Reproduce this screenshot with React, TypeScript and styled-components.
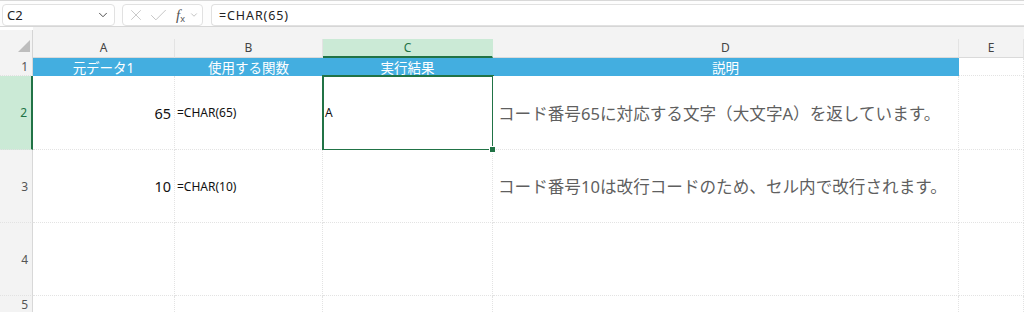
import styled, { createGlobalStyle } from "styled-components";
import { ChevronDown, X, Check } from "lucide-react";

const GlobalStyle = createGlobalStyle`
  html, body {
    margin: 0;
    padding: 0;
    background: #ffffff;
    font-family: "Noto Sans", "Noto Sans CJK JP", sans-serif;
    overflow: hidden;
  }
`;

const GREEN = "#217346";
const BLUE = "#43aee0";

const Page = styled.div`
  width: 1024px;
  height: 312px;
  overflow: hidden;
  display: flex;
  flex-direction: column;
`;

const Toolbar = styled.div`
  display: flex;
  align-items: center;
  gap: 7px;
  height: 22px;
  padding: 3px 0 0 2px;
  border-top: 1px solid #d8d8d8;
  border-bottom: 1px solid #d6d6d6;
  background: #fdfdfd;
`;

const Box = styled.div`
  height: 20px;
  border: 1px solid #e1e1e1;
  border-radius: 4px;
  background: #ffffff;
  display: flex;
  align-items: center;
  box-sizing: content-box;
`;

const NameBox = styled(Box)`
  width: 107px;
  justify-content: space-between;
  padding: 0 0 0 4px;
  font-size: 13px;
  color: #222;
`;

const FuncBox = styled(Box)`
  width: 75px;
  gap: 3px;
  padding-left: 4px;
  color: #c4c4c4;

  & > svg {
    flex-shrink: 0;
  }
`;

const Fx = styled.span`
  font-family: "Liberation Serif", serif;
  font-style: italic;
  font-size: 15px;
  color: #555;
  display: flex;
  align-items: center;
  margin-left: 4px;
  flex-shrink: 0;

  sub {
    font-size: 9px;
    font-style: normal;
    font-family: "Noto Sans", sans-serif;
    margin-top: 7px;
  }
`;

const SmallCaret = styled.span`
  display: flex;
  align-items: center;
  flex-shrink: 0;
  margin-left: 1px;
  color: #b0b0b0;
`;

const FormulaInput = styled(Box)`
  flex: 1;
  margin-left: 1px;
  padding-left: 7px;
  border-right: none;
  border-radius: 4px 0 0 4px;
  font-size: 12.5px;
  letter-spacing: 0.9px;
  color: #222;
`;

const Sheet = styled.div`
  display: grid;
  grid-template-columns: 33px 142px 148px 170px 466px 1fr;
  grid-template-rows: 31px 18px 74px 73px 73px 18px;
  background: #ffffff;
`;

const Corner = styled.div`
  background: #f3f3f3;
  border-right: 1px solid #d5d5d5;
  margin-top: 3px;
  display: flex;
  align-items: flex-end;
  justify-content: flex-end;
  padding: 0 2px 6px 0;
`;

const ColHead = styled.div`
  background: #f3f3f3;
  display: flex;
  align-items: flex-end;
`;

const ColLabel = styled.div<{ $active?: boolean }>`
  flex: 1;
  height: ${(p) => (p.$active ? "16px" : "17px")};
  display: flex;
  align-items: center;
  justify-content: center;
  padding-bottom: 1px;
  font-size: 12px;
  color: ${(p) => (p.$active ? GREEN : "#444")};
  background: ${(p) => (p.$active ? "#cbead6" : "transparent")};
  border-right: 1px solid ${(p) => (p.$active ? "#cbead6" : "#e3e3e3")};
  border-bottom: ${(p) => (p.$active ? `2px solid ${GREEN}` : "1px solid #dadada")};
`;

const RowHead = styled.div<{ $active?: boolean }>`
  background: ${(p) => (p.$active ? "#cbead6" : "#f3f3f3")};
  color: ${(p) => (p.$active ? GREEN : "#555")};
  border-right: ${(p) => (p.$active ? `2px solid ${GREEN}` : "1px solid #d8d8d8")};
  border-bottom: 1px dotted #e2e2e2;
  display: flex;
  align-items: center;
  justify-content: flex-end;
  padding-right: 4px;
  font-size: 12px;
  box-sizing: border-box;
`;

const Cell = styled.div<{
  $blue?: boolean;
  $align?: "left" | "right" | "center";
  $size?: number;
  $muted?: boolean;
  $selected?: boolean;
}>`
  position: relative;
  box-sizing: border-box;
  display: flex;
  align-items: center;
  justify-content: ${(p) =>
    p.$align === "right" ? "flex-end" : p.$align === "center" ? "center" : "flex-start"};
  padding: 0 3px 0 ${(p) => (p.$muted ? "5px" : "2px")};
  white-space: nowrap;
  font-size: ${(p) => p.$size ?? 12}px;
  color: ${(p) => (p.$blue ? "#ffffff" : p.$muted ? "#5f5f5f" : "#111")};
  background: ${(p) => (p.$blue ? BLUE : "#ffffff")};
  border-right: ${(p) => (p.$blue ? "none" : "1px dotted #e3e3e3")};
  border-bottom: ${(p) => (p.$blue ? "none" : "1px dotted #e3e3e3")};

  ${(p) =>
    p.$selected &&
    `
    &::after {
      content: "";
      position: absolute;
      inset: -1px -2px -2px -1px;
      border: 2px solid ${GREEN};
      pointer-events: none;
    }
    &::before {
      content: "";
      position: absolute;
      right: -4px;
      bottom: -4px;
      width: 5px;
      height: 5px;
      background: ${GREEN};
      border: 1px solid #fff;
      z-index: 2;
    }
  `}
`;

type CellData = {
  text?: string;
  align?: "left" | "right" | "center";
  size?: number;
  muted?: boolean;
  selected?: boolean;
};

const columns = ["A", "B", "C", "D", "E"];

const headers = ["元データ1", "使用する関数", "実行結果", "説明"];

const rows: CellData[][] = [
  [
    { text: "65", align: "right", size: 14.5 },
    { text: "=CHAR(65)" },
    { text: "A", selected: true },
    { text: "コード番号65に対応する文字（大文字A）を返しています。", size: 16.6, muted: true },
    {},
  ],
  [
    { text: "10", align: "right", size: 14.5 },
    { text: "=CHAR(10)" },
    {},
    { text: "コード番号10は改行コードのため、セル内で改行されます。", size: 16.6, muted: true },
    {},
  ],
  [{}, {}, {}, {}, {}],
  [{}, {}, {}, {}, {}],
];

export default function App() {
  return (
    <Page>
      <GlobalStyle />
      <Toolbar>
        <NameBox>
          C2
          <ChevronDown size={14} color="#444" strokeWidth={1.6} style={{ marginRight: 4 }} />
        </NameBox>
        <FuncBox>
          <X size={18} strokeWidth={1.2} />
          <Check size={21} strokeWidth={1.1} />
          <Fx>
            f<sub>x</sub>
          </Fx>
          <SmallCaret>
            <ChevronDown size={10} strokeWidth={1.8} />
          </SmallCaret>
        </FuncBox>
        <FormulaInput>=CHAR(65)</FormulaInput>
      </Toolbar>

      <Sheet>
        <Corner>
          <svg width="12" height="12" viewBox="0 0 12 12">
            <polygon points="12,0 12,12 0,12" fill="#bdbdbd" />
          </svg>
        </Corner>
        {columns.map((c) => (
          <ColHead key={c}>
            <ColLabel $active={c === "C"}>{c}</ColLabel>
          </ColHead>
        ))}

        <RowHead>1</RowHead>
        {headers.map((h) => (
          <Cell key={h} $blue $align="center" $size={13.5}>
            {h}
          </Cell>
        ))}
        <Cell />

        {rows.map((row, i) => (
          <>
            <RowHead key={`h${i}`} $active={i === 0}>
              {i + 2}
            </RowHead>
            {row.map((cell, j) => (
              <Cell
                key={`${i}-${j}`}
                $align={cell.align}
                $size={cell.size}
                $muted={cell.muted}
                $selected={cell.selected}
              >
                {cell.text}
              </Cell>
            ))}
          </>
        ))}
      </Sheet>
    </Page>
  );
}
